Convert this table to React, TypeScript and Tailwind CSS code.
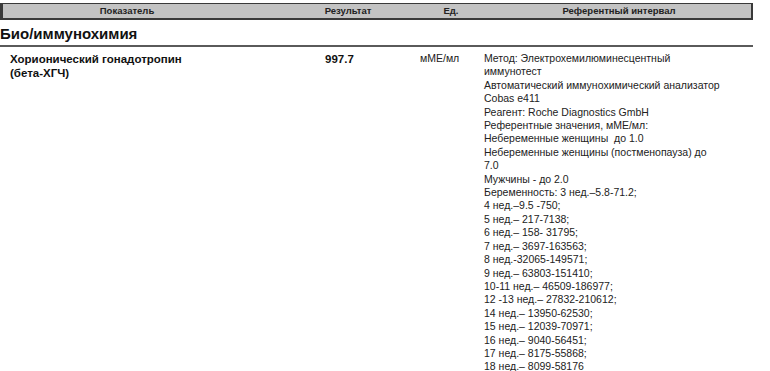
import React from 'react';

const referenceLines = [
  'Метод: Электрохемилюминесцентный',
  'иммунотест',
  'Автоматический иммунохимический анализатор',
  'Cobas e411',
  'Реагент: Roche Diagnostics GmbH',
  'Референтные значения, мМЕ/мл:',
  'Небеременные женщины  до 1.0',
  'Небеременные женщины (постменопауза) до',
  '7.0',
  'Мужчины - до 2.0',
  'Беременность: 3 нед.–5.8-71.2;',
  '4 нед.–9.5 -750;',
  '5 нед.– 217-7138;',
  '6 нед.– 158- 31795;',
  '7 нед.– 3697-163563;',
  '8 нед.-32065-149571;',
  '9 нед.– 63803-151410;',
  '10-11 нед.– 46509-186977;',
  '12 -13 нед.– 27832-210612;',
  '14 нед.– 13950-62530;',
  '15 нед.– 12039-70971;',
  '16 нед.– 9040-56451;',
  '17 нед.– 8175-55868;',
  '18 нед.– 8099-58176',
];

export default function App() {
  return (
    <div className="h-[371px] w-[770px] overflow-hidden bg-white font-['Liberation_Sans',Arial,sans-serif] text-[#111]">
      <div className="pt-[3px]">
        {/* table header */}
        <div className="grid h-[17px] w-[753px] grid-cols-[248px_194px_12px_1fr] items-center border-t border-b-2 border-l-[3px] border-r-2 border-[#3a3a3a] bg-[#c3c3c3] text-[9.5px] font-bold text-[#222]">
          <div className="flex justify-center">Показатель</div>
          <div className="flex justify-center">Результат</div>
          <div className="flex justify-center whitespace-nowrap">Ед.</div>
          <div className="flex justify-center pl-[30px]">Референтный интервал</div>
        </div>

        {/* section */}
        <div className="w-[753px] border-b-2 border-[#5a5a5a] pt-[4px] pb-[1px] text-[15px] font-bold leading-[20px] text-[#111]">
          Био/иммунохимия
        </div>

        {/* row */}
        <div className="grid w-[753px] grid-cols-[315px_95px_64px_1fr] pt-[5px]">
          <div className="pl-[10px] text-[11.5px] font-bold leading-[14px]">
            Хорионический гонадотропин
            <br />
            (бета-ХГЧ)
          </div>
          <div className="pl-[10px] text-[11.5px] font-bold leading-[14px]">997.7</div>
          <div className="pl-[10px] text-[10.5px] leading-[13.4px] text-[#222]">мМЕ/мл</div>
          <div className="pl-[10px] text-[10.5px] leading-[13.4px] text-[#222]">
            {referenceLines.map((line, i) => (
              <div key={i} className="whitespace-pre">{line}</div>
            ))}
          </div>
        </div>
      </div>
    </div>
  );
}
